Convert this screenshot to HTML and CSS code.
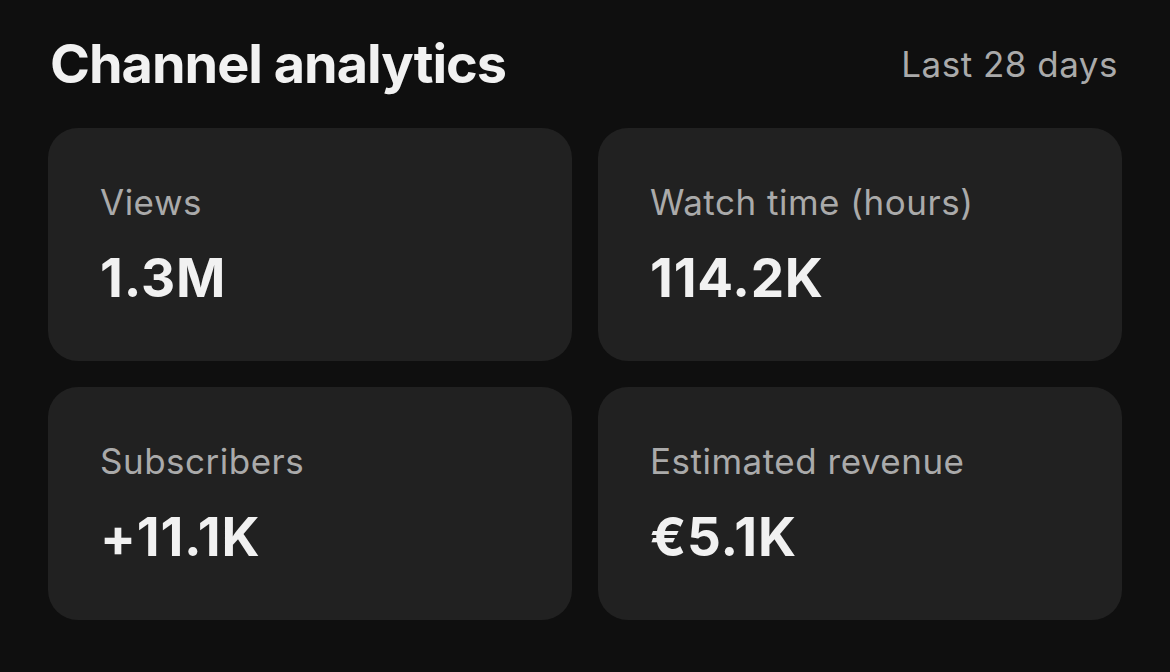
FILE: index.html
```html
<!DOCTYPE html>
<html lang="en">
<head>
    <meta charset="UTF-8">
    <meta name="viewport" content="width=device-width, initial-scale=1.0">
    <title>Channel analytics</title>
    <link rel="stylesheet" href="styles.css">
</head>
<body>
    <div class="header">
        <h1>Channel analytics</h1>
        <span class="period">Last 28 days</span>
    </div>
    <div class="grid">
        <div class="card">
            <div class="label">Views</div>
            <div class="value">1.3M</div>
        </div>
        <div class="card">
            <div class="label">Watch time (hours)</div>
            <div class="value">114.2K</div>
        </div>
        <div class="card">
            <div class="label">Subscribers</div>
            <div class="value">+11.1K</div>
        </div>
        <div class="card">
            <div class="label">Estimated revenue</div>
            <div class="value">€5.1K</div>
        </div>
    </div>
</body>
</html>
```

FILE: styles.css
```css
body {
    margin: 0;
    padding: 0 48px;
    font-family: Inter, "Noto Sans", sans-serif;
    background-color: #0f0f0f;
    color: #f1f1f1;
}
.header {
    display: flex;
    justify-content: space-between;
    align-items: center;
    height: 128px;
    padding-left: 2px;
    padding-right: 4px;
    box-sizing: border-box;
}
h1 {
    margin: 0;
    font-size: 54px;
    font-weight: 700;
    line-height: 128px;
    letter-spacing: -1px;
}
.period {
    font-size: 35px;
    letter-spacing: 0.5px;
    color: #aaaaaa;
}
.grid {
    display: grid;
    grid-template-columns: 1fr 1fr;
    gap: 26px;
}
.card {
    height: 233px;
    box-sizing: border-box;
    padding: 54px 52px 0;
    border-radius: 30px;
    background-color: #212121;
}
.label {
    font-size: 35px;
    letter-spacing: 0.5px;
    color: #aaaaaa;
    line-height: 40px;
}
.value {
    margin-top: 26px;
    font-size: 53px;
    font-weight: 700;
    letter-spacing: 0.8px;
    line-height: 60px;
}
```
